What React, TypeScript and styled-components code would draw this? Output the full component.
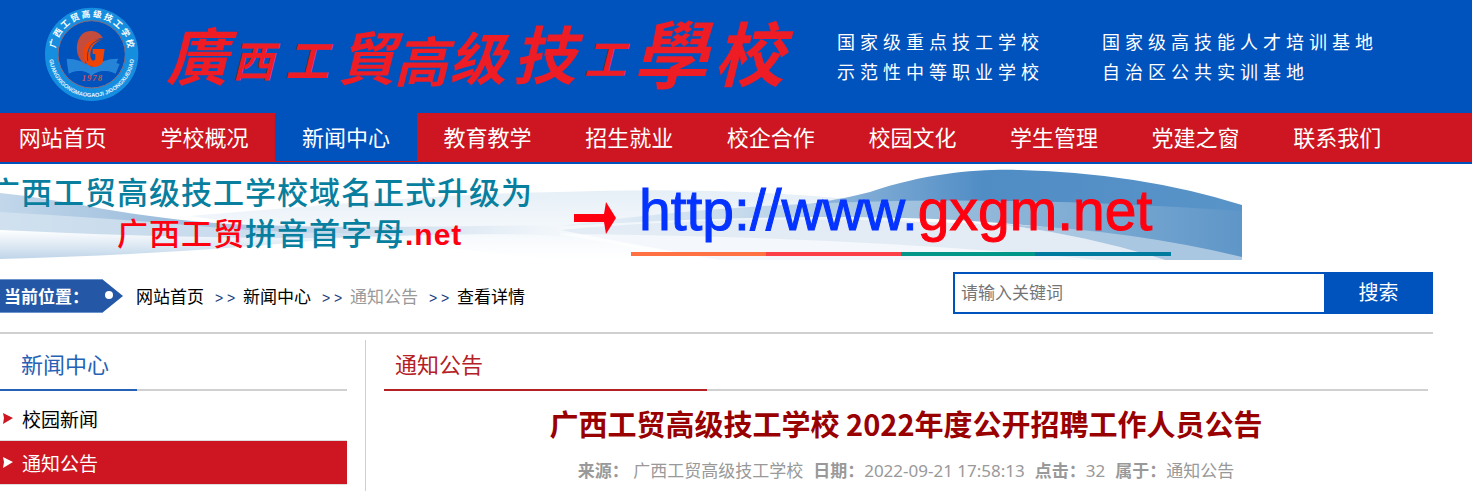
import React from "react";
import styled, { createGlobalStyle, css } from "styled-components";

const color = {
  blue: "#0052bd",
  red: "#cd1621",
  rule: "#d0d0d0",
  navy: "#17407f",
};

const GlobalStyle = createGlobalStyle`
  *, *::before, *::after { box-sizing: border-box; }
  body {
    margin: 0;
    background: #fff;
    color: #000;
    font-family: "Noto Sans CJK SC", "Noto Sans", sans-serif;
    font-size: 17px;
    line-height: 24px;
    overflow: hidden;
  }
  a { color: inherit; text-decoration: none; }
  ul, ol { list-style: none; margin: 0; padding: 0; }
  h1, h2, h3, p { margin: 0; }
`;

const Header = styled.header`
  display: flex;
  height: 113px;
  padding-left: 40px;
  background: ${color.blue};
  color: #fff;
`;

const Emblem = styled.svg`
  flex: none;
  width: 104px;
  height: 104px;
  margin-top: 4px;
`;

const Wordmark = styled.svg`
  flex: none;
  width: 680px;
  height: 113px;
  overflow: visible;
`;

const Slogans = styled.div`
  display: flex;
  gap: 58px;
  padding: 26px 0 0 13px;
  font-size: 18px;
  line-height: 30px;
  letter-spacing: 5px;
  white-space: nowrap;
`;

const Nav = styled.nav`
  height: 51px;
  background: ${color.red};
  border-bottom: 2px solid ${color.blue};
`;

const NavList = styled.ul`
  display: grid;
  grid-template-columns: repeat(10, 1fr);
  margin: 0 64px 0 -8px;
`;

const NavLink = styled.a<{ $active?: boolean }>`
  display: block;
  height: 48px;
  font-size: 22px;
  line-height: 46px;
  text-align: center;
  white-space: nowrap;
  color: #fff;
  background: ${(p) => (p.$active ? color.blue : "transparent")};
`;

const BannerLink = styled.a`
  display: block;
`;

const BannerArt = styled.svg`
  display: block;
  width: 1242px;
  height: 96px;
`;

const Page = styled.main`
  margin-right: 39px;
`;

const Toolbar = styled.div`
  display: flex;
  align-items: center;
  justify-content: space-between;
  height: 74px;
  border-bottom: 2px solid ${color.rule};
  padding-bottom: 6px;
`;

const Location = styled.nav`
  display: flex;
  align-items: center;
  padding-top: 6px;
`;

const Tag = styled.span`
  position: relative;
  width: 124px;
  height: 34px;
  padding-left: 4px;
  color: #fff;
  font-weight: 700;
  line-height: 34px;
  white-space: nowrap;
`;

const TagShape = styled.svg`
  position: absolute;
  inset: 0;
  z-index: -1;
`;

const Crumbs = styled.ol`
  display: flex;
  padding: 2px 0 0 12px;
  white-space: nowrap;
`;

const Crumb = styled.li<{ $muted?: boolean }>`
  color: ${(p) => (p.$muted ? "#999" : "#000")};

  &:not(:first-child)::before {
    content: "> >";
    display: inline-block;
    width: 39px;
    padding-left: 11px;
    color: ${color.navy};
    font-family: "Liberation Sans", sans-serif;
    font-size: 14px;
  }
`;

const Search = styled.form`
  display: flex;
  width: 480px;
  height: 42px;
`;

const SearchInput = styled.input`
  flex: 1;
  min-width: 0;
  padding: 0 6px 2px;
  border: 2px solid ${color.blue};
  border-right: 0;
  border-radius: 0;
  outline: 0;
  font: inherit;

  &::placeholder { color: #757575; }
`;

const SearchButton = styled.button`
  width: 109px;
  padding: 0 0 2px;
  border: 0;
  background: ${color.blue};
  color: #fff;
  font: inherit;
  font-size: 20px;
`;

const Columns = styled.div`
  display: flex;
  padding-top: 6px;
`;

const Sidebar = styled.aside`
  width: 366px;
  padding-right: 18px;
  border-right: 1px solid ${color.rule};
`;

const Article = styled.article`
  flex: 1;
  min-height: 151px;
  padding: 0 5px 0 18px;
`;

const SectionTitle = styled.h2<{ $tone: string; $mark: string; $indent: number }>`
  height: 51px;
  padding-left: ${(p) => p.$indent}px;
  border-bottom: 2px solid;
  border-image: linear-gradient(
      to right,
      ${(p) => p.$tone} ${(p) => p.$mark},
      ${color.rule} ${(p) => p.$mark}
    ) 2;
  color: ${(p) => p.$tone};
  font-size: 22px;
  font-weight: 400;
  line-height: 46px;
`;

const SideLink = styled.a<{ $active?: boolean }>`
  display: flex;
  align-items: center;
  gap: 9px;
  height: 44px;
  padding-left: 3px;
  border-bottom: 1px solid #ddd;
  font-size: 19px;
  ${(p) =>
    p.$active &&
    css`
      background: ${color.red};
      color: #fff;
    `}
`;

const SideList = styled.ul`
  padding-top: 6px;
`;

const ArticleTitle = styled.h1`
  padding-top: 10px;
  color: #990000;
  font-size: 29px;
  font-weight: 700;
  line-height: 44px;
  text-align: center;
`;

const Meta = styled.p`
  display: flex;
  justify-content: center;
  gap: 10px;
  padding-top: 14px;
  color: #999;
  font-family: "Noto Sans", "Noto Sans CJK SC", sans-serif;
  white-space: nowrap;
`;

const navItems = [
  "网站首页", "学校概况", "新闻中心", "教育教学", "招生就业",
  "校企合作", "校园文化", "学生管理", "党建之窗", "联系我们",
];

const brush = [
  { c: "廣", x: 22, y: 80, s: 62 },
  { c: "西", x: 88, y: 77, s: 42 },
  { c: "工", x: 141, y: 77, s: 44 },
  { c: "貿", x: 194, y: 80, s: 58 },
  { c: "高", x: 250, y: 82, s: 54 },
  { c: "级", x: 305, y: 80, s: 57 },
  { c: "技", x: 369, y: 79, s: 63 },
  { c: "工", x: 440, y: 75, s: 42 },
  { c: "學", x: 489, y: 83, s: 74 },
  { c: "校", x: 570, y: 81, s: 70 },
];

const meta = [
  ["来源：", "\u00a0广西工贸高级技工学校"],
  ["日期：", "2022-09-21 17:58:13"],
  ["点击：", "32"],
  ["属于：", "通知公告"],
];

function SchoolEmblem() {
  return (
    <Emblem viewBox="0 0 312 312" role="img" aria-label="校徽">
      <defs>
        <path id="arc-top" d="M46 164A110 110 0 1 1 264 164" />
        <path id="arc-bottom" d="M27 151A128 128 0 0 0 283 151" />
      </defs>
      <circle cx="155" cy="151" r="120" fill="none" stroke="#168ee0" strokeWidth="40" />
      <circle cx="155" cy="151" r="101" fill="none" stroke="#8c6577" strokeWidth="3" />
      <text fill="#fff" fontSize="26" fontWeight="700">
        <textPath href="#arc-top" startOffset="50%" textAnchor="middle">广 西 工 贸 高 级 技 工 学 校</textPath>
      </text>
      <text fill="#e4f3ff" fontSize="17" fontWeight="700" fontFamily="'Liberation Sans Narrow', 'Liberation Sans', sans-serif">
        <textPath href="#arc-bottom" startOffset="50%" textAnchor="middle">GUANGXIGONGMAOGAOJI JIGONGXUEXIAO</textPath>
      </text>
      <path d="M80 164Q124 164 156 190Q190 163 235 164L229 177L239 180L227 209Q188 193 161 210L155 217L149 210Q124 193 86 209L82 184Z" fill="#2583d8" />
      <path d="M86 209Q124 190 155 217Q188 190 227 209Q188 200 155 224Q124 200 86 209Z" fill="#0052bd" />
      <path d="M136 181C98 157 107 98 135 85C158 75 180 84 189 103C158 101 134 126 136 181Z" fill="#c44c3d" />
      <path d="M144 183C115 150 129 100 190 105C165 113 149 132 151 158Q157 177 166 166L166 150L158 150L158 135H194L188 176Q167 198 144 183Z" fill="#f04406" />
      <path d="M190 105C153 110 139 135 143 171" fill="none" stroke="#194ba6" strokeWidth="3" />
      <text x="157" y="231" textAnchor="middle" fill="#c45a58" fontFamily="'Liberation Serif', serif" fontStyle="italic" fontWeight="700" fontSize="26" letterSpacing="3">1978</text>
    </Emblem>
  );
}

function DomainBanner() {
  return (
    <BannerArt viewBox="0 0 1242 96" role="img" aria-label="域名升级通知">
      <defs>
        <linearGradient id="hill" x1="0" x2="1" y1="0" y2="0">
          <stop offset="0" stopColor="#e2ecf5" />
          <stop offset=".25" stopColor="#b9d1e8" />
          <stop offset=".45" stopColor="#7eabd5" />
          <stop offset=".62" stopColor="#508dc5" />
          <stop offset="1" stopColor="#5994c8" />
        </linearGradient>
        <linearGradient id="fold" x1="0" x2="1" y1="0" y2="0">
          <stop offset="0" stopColor="#edf3f9" />
          <stop offset=".45" stopColor="#a9c8e2" />
          <stop offset="1" stopColor="#5e96c8" />
        </linearGradient>
        <linearGradient id="left" x1="0" x2="1" y1="0" y2="0">
          <stop offset="0" stopColor="#c2d7ea" />
          <stop offset=".3" stopColor="#9cbddc" />
          <stop offset=".6" stopColor="#c5d8ea" />
          <stop offset="1" stopColor="#f3f7fb" />
        </linearGradient>
        <linearGradient id="sheet" x1="0" x2="0" y1="0" y2="1">
          <stop offset="0" stopColor="#e6eff7" />
          <stop offset="1" stopColor="#fff" />
        </linearGradient>
        <linearGradient id="low" x1="0" x2="0" y1="0" y2="1">
          <stop offset="0" stopColor="#fff" />
          <stop offset="1" stopColor="#bfd5e9" />
        </linearGradient>
      </defs>
      <path d="M190 52C340 40 440 30 560 28Q720 22 860 36L1000 96H560Q350 75 190 52Z" fill="url(#sheet)" />
      <path d="M0 29C70 36 130 54 230 60C360 66 500 60 560 62V72C420 64 270 86 0 66Z" fill="url(#left)" />
      <path d="M0 48Q110 54 210 63T430 68Q260 84 0 66Z" fill="#d3e2f0" opacity=".8" />
      <path d="M0 66Q190 75 340 74Q190 90 0 95Z" fill="url(#low)" />
      <path d="M560 62C690 55 800 46 870 28C930 8 980 5 1020 6Q1140 9 1242 41V78Q1080 46 900 42Q700 48 560 62Z" fill="url(#hill)" />
      <path d="M560 62Q860 20 1242 47V96H1205C1070 50 850 45 560 62Z" fill="url(#fold)" />
      <path d="M560 66C760 48 900 58 1000 60Q1090 72 1165 96H720Q640 82 560 66Z" fill="#e3ecf5" />
      <path d="M1000 60Q1130 66 1242 93V96H1165Q1090 72 1000 60Z" fill="#aac7e1" />
      <path d="M560 70Q850 72 1100 96H700Z" fill="#fff" opacity=".6" />
      <g fontSize="31" fontWeight="500" fill="#087f9e" letterSpacing="1">
        <text x="-11" y="40">广西工贸高级技工学校域名正式升级为</text>
        <text x="117" y="81">
          <tspan fill="#ff0010">广西工贸</tspan>拼音首字母<tspan fill="#ff0010" fontFamily="'Liberation Sans', sans-serif" fontWeight="700" fontSize="30">.net</tspan>
        </text>
      </g>
      <path d="M574 50H604L606 38L616 54L606 70L604 58H574Z" fill="#ff0010" />
      <g fontFamily="'Liberation Sans', sans-serif" fontSize="57" strokeWidth="1">
        <text x="639" y="66" fill="#0433ff" stroke="#0433ff">
          http://www.<tspan fill="#ff0010" stroke="#ff0010">gxgm.net</tspan>
        </text>
      </g>
      <path d="M631 90H766" stroke="#ff7043" strokeWidth="4" />
      <path d="M766 90H901" stroke="#fb4048" strokeWidth="4" />
      <path d="M901 90H1035" stroke="#009688" strokeWidth="4" />
      <path d="M1035 90H1171" stroke="#007ba0" strokeWidth="4" />
    </BannerArt>
  );
}

function Bullet({ fill }: { fill: string }) {
  return (
    <svg width="10" height="12" viewBox="0 0 10 12" aria-hidden="true">
      <path d="M0 0L10 5L0 11L1 5Z" fill={fill} />
    </svg>
  );
}

export default function App() {
  return (
    <>
      <GlobalStyle />
      <Header>
        <SchoolEmblem />
        <Wordmark viewBox="0 0 680 113" role="img" aria-label="广西工贸高级技工学校">
          <text fill="#ee1c25" fontWeight="700" fontStyle="italic" fontFamily="'Noto Sans CJK TC', sans-serif">
            {brush.map((b, i) => (
              <tspan key={i} x={b.x} y={b.y} fontSize={b.s}>{b.c}</tspan>
            ))}
          </text>
        </Wordmark>
        <Slogans>
          <p>国家级重点技工学校<br />示范性中等职业学校</p>
          <p>国家级高技能人才培训基地<br />自治区公共实训基地</p>
        </Slogans>
      </Header>
      <Nav>
        <NavList>
          {navItems.map((label) => (
            <li key={label}>
              <NavLink href="#" $active={label === "新闻中心"}>{label}</NavLink>
            </li>
          ))}
        </NavList>
      </Nav>
      <BannerLink href="#">
        <DomainBanner />
      </BannerLink>
      <Page>
        <Toolbar>
          <Location aria-label="当前位置">
            <Tag>
              <TagShape width="124" height="34" viewBox="0 0 124 34" aria-hidden="true">
                <path d="M0 0H102L123 17L102 34H0Z" fill="#2458a6" />
                <path d="M0 .5H102M0 33.500H102" stroke="#6c93cb" />
                <circle cx="109" cy="16" r="4" fill="#fff" />
              </TagShape>
              当前位置：
            </Tag>
            <Crumbs>
              <Crumb><a href="#">网站首页</a></Crumb>
              <Crumb><a href="#">新闻中心</a></Crumb>
              <Crumb $muted><a href="#">通知公告</a></Crumb>
              <Crumb>查看详情</Crumb>
            </Crumbs>
          </Location>
          <Search onSubmit={(e) => e.preventDefault()}>
            <SearchInput type="text" placeholder="请输入关键词" aria-label="请输入关键词" />
            <SearchButton type="submit">搜索</SearchButton>
          </Search>
        </Toolbar>
        <Columns>
          <Sidebar>
            <SectionTitle $tone="#2562b5" $mark="137px" $indent={21}>新闻中心</SectionTitle>
            <SideList>
              <li><SideLink href="#"><Bullet fill={color.red} />校园新闻</SideLink></li>
              <li><SideLink href="#" $active><Bullet fill="#fff" />通知公告</SideLink></li>
            </SideList>
          </Sidebar>
          <Article>
            <SectionTitle $tone="#b52025" $mark="31%" $indent={11}>通知公告</SectionTitle>
            <ArticleTitle>广西工贸高级技工学校 2022年度公开招聘工作人员公告</ArticleTitle>
            <Meta>
              {meta.map(([k, v]) => (
                <span key={k}><strong>{k}</strong>{v}</span>
              ))}
            </Meta>
          </Article>
        </Columns>
      </Page>
    </>
  );
}
